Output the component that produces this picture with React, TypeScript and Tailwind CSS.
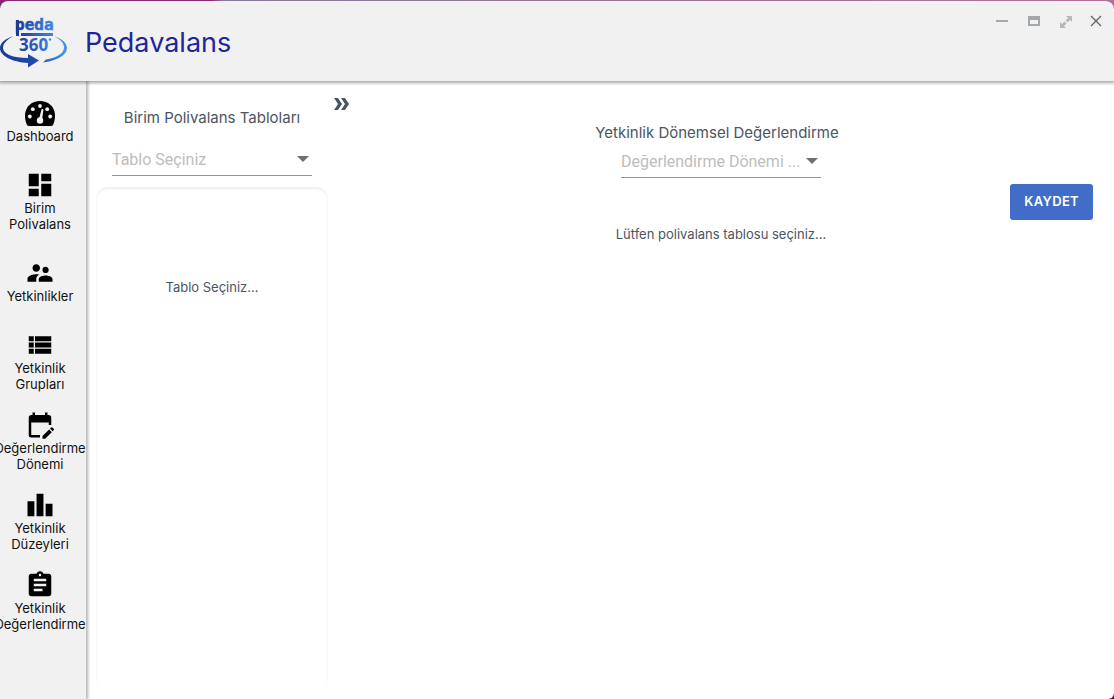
import type { ReactNode } from "react";
import {
  MdAssignment,
  MdDashboard,
  MdEditCalendar,
  MdLeaderboard,
  MdSupervisorAccount,
  MdViewList,
} from "react-icons/md";

type NavItem = { icon: ReactNode; lines: string[] };

function GaugeIcon() {
  return (
    <svg width="30" height="30" viewBox="0 0 30 30" aria-hidden="true">
      <path d="M2 27C-4 13 4 3 15 3s19 10 13 24q-.6 1-2 1H4q-1.400 0-2-1z" fill="#000" />
      <g fill="#f1f1f1">
        <circle cx="4.800" cy="18.500" r="1.900" />
        <circle cx="7.800" cy="11.200" r="1.900" />
        <circle cx="15" cy="8" r="1.900" />
        <circle cx="22.200" cy="11.200" r="1.900" />
        <circle cx="25.200" cy="18.500" r="1.900" />
        <circle cx="15" cy="22.500" r="3.200" />
        <path d="M14 21l2.500-9.500q.4-.8 1.200-.5.800.2.700 1.100L17 22z" />
      </g>
    </svg>
  );
}

const navItems: NavItem[] = [
  { icon: <GaugeIcon />, lines: ["Dashboard"] },
  { icon: <MdDashboard size={30} />, lines: ["Birim", "Polivalans"] },
  { icon: <MdSupervisorAccount size={30} />, lines: ["Yetkinlikler"] },
  { icon: <MdViewList size={30} />, lines: ["Yetkinlik", "Grupları"] },
  { icon: <MdEditCalendar size={30} />, lines: ["Değerlendirme", "Dönemi"] },
  { icon: <MdLeaderboard size={30} />, lines: ["Yetkinlik", "Düzeyleri"] },
  { icon: <MdAssignment size={30} />, lines: ["Yetkinlik", "Değerlendirme"] },
];

function Logo() {
  return (
    <svg width="68" height="56" viewBox="0 14 68 56" role="img" aria-label="Peda 360">
      <defs>
        <linearGradient id="logoBlue" gradientUnits="userSpaceOnUse" x1="14" y1="0" x2="56" y2="0">
          <stop offset="0" stopColor="#17358f" />
          <stop offset="1" stopColor="#3e8cee" />
        </linearGradient>
        <linearGradient id="logoRing" gradientUnits="userSpaceOnUse" x1="0" y1="0" x2="67" y2="0">
          <stop offset="0" stopColor="#193a98" />
          <stop offset="0.5" stopColor="#2049a8" />
          <stop offset="1" stopColor="#4b95ee" />
        </linearGradient>
      </defs>
      <text x="15" y="30" fontFamily="'DejaVu Sans Mono', monospace" fontWeight="700" fontSize="16" fill="url(#logoBlue)" stroke="url(#logoBlue)" strokeWidth="0.500">
        peda
      </text>
      <path d="M16 20h3v16h-3zM21 33h32v3H21z" fill="url(#logoBlue)" />
      <text x="19" y="51" fontFamily="'Open Sans', sans-serif" fontWeight="700" fontSize="17" fill="url(#logoBlue)">
        360
      </text>
      <circle cx="50" cy="39.500" r="1.200" fill="#3e8cee" />
      <path
        d="M13 36C5 39 0 43 0 48c0 8 12 14 28 15v4.500l11-7-11-6.500v4C13 58 3 54 3 48c0-5 4-8 10-12z"
        fill="url(#logoRing)"
      />
      <path d="M54 36c8 3 13 7 13 12 0 7-10 13-24 14.500l3-3c11-2 18-6 18-12 0-5-4-8-10-11.500z" fill="url(#logoRing)" />
    </svg>
  );
}

function WindowControls() {
  return (
    <div className="flex items-center gap-4 pt-3 pr-3">
      <button type="button" aria-label="Küçült" className="size-4">
        <svg viewBox="0 0 16 16" className="size-4">
          <path d="M2 8h12" stroke="#a5a8ab" strokeWidth="2" />
        </svg>
      </button>
      <button type="button" aria-label="Pencere" className="size-4">
        <svg viewBox="0 0 16 16" className="size-4">
          <path d="M2 3h12v10H2zM4 7v4h8V7z" fill="#a5a8ab" fillRule="evenodd" />
        </svg>
      </button>
      <button type="button" aria-label="Tam ekran" className="size-4">
        <svg viewBox="0 0 16 16" className="size-4" fill="#b5b8ba">
          <path d="M8 3h6v6l-2-2-2.500 2.500-2-2L10 5zM8 15H2V9l2 2 2.500-2.500 2 2L6 13z" />
        </svg>
      </button>
      <button type="button" aria-label="Kapat" className="-ml-1 size-4">
        <svg viewBox="0 0 16 16" className="size-4" stroke="#5f6368" strokeWidth="1.300">
          <path d="M5 3l10 10M15 3L5 13" />
        </svg>
      </button>
    </div>
  );
}

function LineSelect({ id, placeholder }: { id: string; placeholder: string }) {
  return (
    <div className="relative w-[200px]">
      <select
        id={id}
        defaultValue=""
        className="block h-8 w-full appearance-none border-b border-[#949494] bg-transparent pr-5 font-[Roboto,sans-serif] text-base text-[#bdbdbd] outline-none"
      >
        <option value="">{placeholder}</option>
      </select>
      <svg viewBox="0 0 12 6" className="pointer-events-none absolute top-3 right-[3px] h-[6px] w-3" fill="#6f6f6f">
        <path d="M0 0h12L6 6z" />
      </svg>
    </div>
  );
}

export default function App() {
  return (
    <div className="min-h-screen bg-[#4b1679] font-[Inter,sans-serif]">
      <div className="bg-linear-to-r from-[#8a2570] from-19% via-[#857994] via-20% to-[#b06f9b] pt-px">
        <div className="flex min-h-[calc(100vh-1px)] flex-col overflow-hidden rounded-t-lg bg-[#4b1679]">
          <header className="relative z-10 flex h-20 items-start justify-between bg-[#f1f1f1] shadow-[0_1px_3px_1px_rgba(0,0,0,0.35)]">
            <div className="flex items-center gap-[17px] pt-[13px]">
              <Logo />
              <h1 className="pt-[2px] text-[27px] leading-8 text-[#20259a]">Pedavalans</h1>
            </div>
            <WindowControls />
          </header>

          <div className="flex flex-1 overflow-hidden rounded-br-md bg-white">
            <nav className="w-[86px] shrink-0 bg-[#f1f1f1] shadow-[1px_0_3px_1px_rgba(0,0,0,0.3)]">
              {navItems.map((item) => (
                <a
                  key={item.lines.join(" ")}
                  href="#"
                  className="flex h-20 w-20 flex-col items-center justify-center text-[13px] leading-4 whitespace-nowrap text-[#111111]"
                >
                  <span className="text-black">{item.icon}</span>
                  {item.lines.map((line) => (
                    <span key={line}>{line}</span>
                  ))}
                </a>
              ))}
            </nav>

            <main className="flex flex-1 text-[#4b5563]">
              <aside className="ml-[10px] flex w-[232px] shrink-0 flex-col items-center pt-[25px] pb-2">
                <label htmlFor="table-select" className="text-[15px] leading-6">
                  Birim Polivalans Tabloları
                </label>
                <div className="pt-[14px]">
                  <LineSelect id="table-select" placeholder="Tablo Seçiniz" />
                </div>
                <div className="mt-[11px] w-full flex-1 rounded-xl pt-[90px] text-center text-[13px] leading-5 shadow-[inset_0_2px_3px_rgba(0,0,0,0.07)]">
                  Tablo Seçiniz...
                </div>
              </aside>

              <section className="flex flex-1 flex-col items-center px-[6px] pt-[15px]">
                <button type="button" aria-label="Paneli aç" className="h-4 w-4 self-start">
                  <svg viewBox="0 0 16 16" className="size-4" fill="#4b5563">
                    <path d="M0 2h4l4 6-4 6H0l4-6zM7 2h4l4 6-4 6H7l4-6z" />
                  </svg>
                </button>
                <label htmlFor="period-select" className="mt-[9px] mr-2 text-[15px] leading-6">
                  Yetkinlik Dönemsel Değerlendirme
                </label>
                <div className="pt-px">
                  <LineSelect id="period-select" placeholder="Değerlendirme Dönemi ..." />
                </div>
                <button
                  type="button"
                  className="mt-[6px] mr-[15px] h-9 self-end rounded-[3px] bg-[#416dc9] px-[14px] text-[13px] font-semibold tracking-wide text-white"
                >
                  KAYDET
                </button>
                <p className="mt-1 text-[13px] leading-5">Lütfen polivalans tablosu seçiniz...</p>
              </section>
            </main>
          </div>
        </div>
      </div>
    </div>
  );
}
